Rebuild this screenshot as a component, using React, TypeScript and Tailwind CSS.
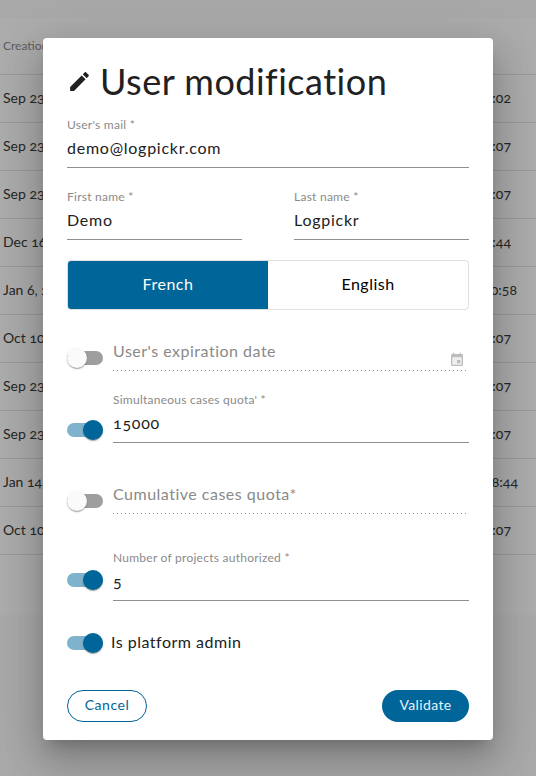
const rows = [
  { left: "Sep 23, 2021", right: "14:02", pr: "pr-[25px]" },
  { left: "Sep 23, 2021", right: "14:07", pr: "pr-[25px]" },
  { left: "Sep 23, 2021", right: "14:07", pr: "pr-[25px]" },
  { left: "Dec 16, 2021", right: "10:44", pr: "pr-[25px]" },
  { left: "Jan 6, 2022", right: "10:58", pr: "pr-[19px]" },
  { left: "Oct 10, 2021", right: "14:07", pr: "pr-[25px]" },
  { left: "Sep 23, 2021", right: "14:07", pr: "pr-[25px]" },
  { left: "Sep 23, 2021", right: "14:07", pr: "pr-[25px]" },
  { left: "Jan 14, 2022", right: "18:44", pr: "pr-[18px]" },
  { left: "Oct 10, 2021", right: "14:07", pr: "pr-[25px]" },
];

function Toggle({ on }: { on: boolean }) {
  return (
    <div className="relative h-[20px] w-[36px] shrink-0">
      <div className={`absolute left-0 top-[3px] h-[14px] w-[36px] rounded-full ${on ? "bg-[#7fb2cc]" : "bg-[#9e9e9e]"}`} />
      <div
        className={`absolute top-0 h-[20px] w-[20px] rounded-full shadow-[0_2px_1px_-1px_rgba(0,0,0,0.2),0_1px_1px_rgba(0,0,0,0.14),0_1px_3px_rgba(0,0,0,0.12)] ${on ? "left-[16px] bg-[#006598]" : "left-0 bg-[#fafafa]"}`}
      />
    </div>
  );
}

function Field({ label, value, width }: { label: string; value: string; width: string }) {
  return (
    <div className={`${width} border-b border-[#8f8f8f]`}>
      <div className="text-[12px] leading-[14px] tracking-[0.25px] text-[#8a8a8a]">{label}</div>
      <div className="mt-[4px] h-[31px] text-[16px] leading-[24px] tracking-[0.75px] text-[#212121] [font-feature-settings:'onum']">{value}</div>
    </div>
  );
}

const dotted =
  "bg-[linear-gradient(to_right,#8f8f8f_1px,transparent_1px)] bg-[length:4px_1px] bg-bottom bg-repeat-x";

export default function App() {
  return (
    <div className="relative h-[776px] w-[536px] overflow-hidden bg-[#a9a9a9] font-['Lato','Noto_Sans',sans-serif]">
      <div className="mt-[18px] h-[597px] bg-[#acacac]">
        <div className="h-[57px] border-b border-[#999999] pl-[3px] pt-[20px] text-[12px] leading-[16px] text-[#5c5c5c]">Creation</div>
        {rows.map((r, i) => (
          <div key={i} className={`flex h-[48px] items-center justify-between border-b border-[#999999] pb-[2px] pl-[3px] text-[14px] text-[#262626] [font-feature-settings:'onum'] ${r.pr}`}>
            <span>{r.left}</span>
            <span>{r.right}</span>
          </div>
        ))}
      </div>

      <div className="absolute left-[43px] top-[38px] flex h-[702px] w-[450px] flex-col rounded-[4px] bg-white px-[24px] shadow-[0_11px_15px_-7px_rgba(0,0,0,0.2),0_24px_38px_3px_rgba(0,0,0,0.14),0_9px_46px_8px_rgba(0,0,0,0.12)]">
        <div className="mt-[19px] flex h-[48px] items-center">
          <svg viewBox="0 0 24 24" className="h-[25px] w-[25px] fill-[#212121]">
            <path d="M3 17.25V21h3.75L17.81 9.94l-3.75-3.75L3 17.25zM20.71 7.04c.39-.39.39-1.02 0-1.41l-2.34-2.34c-.39-.39-1.02-.39-1.41 0l-1.83 1.83 3.75 3.75 1.83-1.83z" />
          </svg>
          <h1 className="ml-[8px] text-[36px] font-normal leading-[48px] tracking-[0.5px] text-[#212121]">User modification</h1>
        </div>

        <div className="mt-[13px]">
          <Field label="User's mail *" value="demo@logpickr.com" width="w-full" />
        </div>

        <div className="mt-[22px] flex justify-between">
          <Field label="First name *" value="Demo" width="w-[175px]" />
          <Field label="Last name *" value="Logpickr" width="w-[175px]" />
        </div>

        <div className="mt-[20px] flex h-[50px] overflow-hidden rounded-[4px] border border-[#e0e0e0]">
          <div className="flex w-[200px] items-center justify-center bg-[#006598] pb-[2px] text-[16px] tracking-[0.5px] text-white">French</div>
          <div className="flex flex-1 items-center justify-center pb-[2px] text-[16px] tracking-[0.5px] text-black">English</div>
        </div>

        <div className="mt-[29px] flex items-start gap-[10px]">
          <div className="mt-[9px]"><Toggle on={false} /></div>
          <div className={`relative h-[32px] flex-1 text-[16px] leading-[24px] tracking-[0.5px] text-[#8a8a8a] ${dotted}`}>
            User's expiration date
            <svg viewBox="0 0 24 24" className="absolute right-[4px] top-[13px] h-[16px] w-[16px] fill-[#bdbdbd]">
              <rect x="5" y="8" width="14" height="11" fill="#eeeeee" />
              <path d="M17 12h-5v5h5v-5zM16 1v2H8V1H6v2H5c-1.11 0-1.99.9-1.99 2L3 19c0 1.1.89 2 2 2h14c1.1 0 2-.9 2-2V5c0-1.1-.9-2-2-2h-1V1h-2zm3 18H5V8h14v11z" />
            </svg>
          </div>
        </div>

        <div className="mt-[22px] flex items-start gap-[10px]">
          <div className="mt-[27px]"><Toggle on /></div>
          <Field label="Simultaneous cases quota' *" value="15000" width="flex-1" />
        </div>

        <div className="mt-[39px] flex items-start gap-[10px]">
          <div className="mt-[9px]"><Toggle on={false} /></div>
          <div className={`h-[32px] flex-1 text-[16px] leading-[24px] tracking-[0.5px] text-[#8a8a8a] ${dotted}`}>Cumulative cases quota*</div>
        </div>

        <div className="mt-[37px] flex items-start gap-[10px]">
          <div className="mt-[19px]"><Toggle on /></div>
          <Field label="Number of projects authorized *" value="5" width="flex-1" />
        </div>

        <div className="mt-[30px] flex h-[24px] items-center gap-[8px]">
          <Toggle on />
          <span className="mb-[3px] text-[16px] leading-[24px] tracking-[0.5px] text-[#212121]">Is platform admin</span>
        </div>

        <div className="mt-[35px] flex justify-between">
          <button className="h-[32px] w-[80px] rounded-full border border-[#006598] pb-[3px] text-[14px] tracking-[0.55px] text-[#006598]">Cancel</button>
          <button className="h-[32px] w-[87px] rounded-full bg-[#006598] pb-[3px] text-[14px] tracking-[0.35px] text-[#e6f3fa]">Validate</button>
        </div>
      </div>
    </div>
  );
}
